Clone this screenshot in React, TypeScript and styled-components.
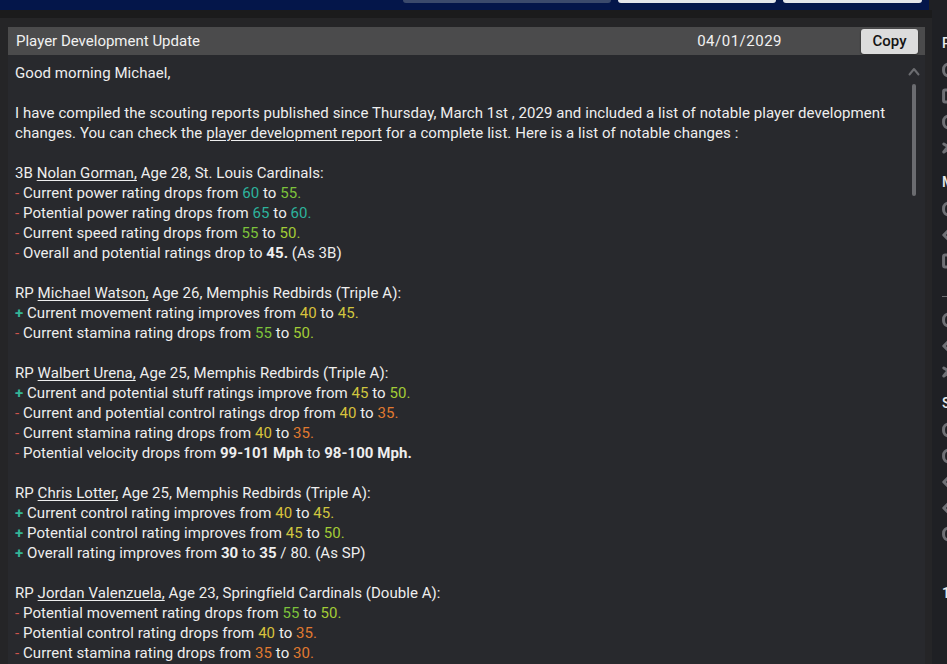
import React from "react";
import styled, { createGlobalStyle } from "styled-components";

const Global = createGlobalStyle`
  html, body { margin: 0; padding: 0; background: #1f2024; overflow: hidden; }
  body { font-family: Roboto, "Noto Sans", "Liberation Sans", sans-serif; }
  * { box-sizing: border-box; }
`;

const Root = styled.div`
  display: flex;
  width: 947px;
  height: 664px;
  overflow: hidden;
`;

const Main = styled.div`
  width: 932px;
  flex: none;
  display: flex;
  flex-direction: column;
`;

const TopBar = styled.div`
  height: 10px;
  margin-right: 3px;
  background: #04164a;
  display: flex;
  align-items: flex-start;
  gap: 7px;
  padding-left: 403px;
`;

const NavButton = styled.div<{ $w: number; $light?: boolean }>`
  width: ${(p) => p.$w}px;
  height: 3px;
  border-radius: 0 0 3px 3px;
  background: ${(p) => (p.$light ? "#e4e6ea" : "#3b4a6c")};
`;

const Band = styled.div`
  height: 8px;
  background: #1b1b1c;
`;

const Panel = styled.div`
  flex: 1;
  min-height: 0;
  background: #252527;
  padding: 9px 7px 0 8px;
  display: flex;
  flex-direction: column;
`;

const Header = styled.div`
  height: 28px;
  flex: none;
  background: #4b4b4c;
  display: flex;
  align-items: center;
  padding: 0 7px 0 8px;
  color: #f1f1f1;
  font-size: 15px;
`;

const HeaderTitle = styled.div`
  flex: 1;
`;

const HeaderDate = styled.div`
  margin-right: 79px;
  letter-spacing: 0.5px;
`;

const CopyButton = styled.button`
  width: 57px;
  height: 25px;
  border: none;
  border-radius: 3px;
  background: #dcdcdc;
  color: #141414;
  font-family: Roboto, "Liberation Sans", sans-serif;
  font-size: 15px;
  font-weight: 500;
  padding: 0;
  box-shadow: 0 1px 2px rgba(0, 0, 0, 0.5);
`;

const Body = styled.div`
  flex: 1;
  min-height: 0;
  background: #28292d;
  display: flex;
  padding-right: 5px;
`;

const Content = styled.div`
  flex: 1;
  min-width: 0;
  padding: 8px 0 0 7px;
  font-size: 15px;
  line-height: 20px;
  letter-spacing: 0.06px;
  color: #eeeeee;
  overflow: hidden;
`;

const Rail = styled.div`
  width: 12px;
  flex: none;
  display: flex;
  flex-direction: column;
  align-items: center;
  padding-top: 12px;
`;

const Thumb = styled.div`
  width: 4px;
  height: 112px;
  margin-top: 8px;
  border-radius: 2px;
  background: #6b6c70;
`;

const Para = styled.p`
  margin: 0 0 20px 0;
`;

const Block = styled.div`
  margin-bottom: 20px;
`;

const Line = styled.div``;

const Link = styled.span`
  text-decoration: underline;
  text-underline-offset: 2px;
`;

const Strong = styled.b`
  font-weight: 700;
`;

const Sign = styled.span<{ $plus?: boolean }>`
  color: ${(p) => (p.$plus ? "#34b596" : "#cc544c")};
  font-weight: ${(p) => (p.$plus ? 700 : 400)};
`;

const colorFor: Record<number, string> = {
  30: "#e07a30",
  35: "#e07a30",
  40: "#d8c23c",
  45: "#d0c63f",
  50: "#a3cc36",
  55: "#7dc23b",
  60: "#2db39c",
  65: "#2db39c",
};

const Num = styled.span<{ $v: number }>`
  color: ${(p) => colorFor[p.$v] ?? "#ececec"};
`;

const Sidebar = styled.div`
  flex: 1;
  background: #1f2024;
  padding: 33px 0 0 10px;
  overflow: hidden;
  display: flex;
  flex-direction: column;
  white-space: nowrap;
`;

const SideTitle = styled.div<{ $mt?: number }>`
  height: 20px;
  line-height: 20px;
  margin-top: ${(p) => p.$mt ?? 0}px;
  margin-bottom: 4px;
  color: #e9e9ea;
  font-size: 14px;
  font-weight: 500;
`;

const SideItem = styled.div`
  height: 26px;
  display: flex;
  align-items: center;
  color: #6f7075;
  & > svg {
    flex: none;
  }
`;

const SideDivider = styled.div`
  height: 1px;
  width: 40px;
  flex: none;
  margin: 22px 0 10px;
  background: #6b6c70;
`;

type Shape = "round" | "square" | "chev" | "x";

const SideIcon: React.FC<{ s: Shape }> = ({ s }) => (
  <SideItem>
    <svg width="18" height="18" viewBox="0 0 18 18" fill="none" stroke="currentColor" strokeWidth="3" strokeLinecap="round" strokeLinejoin="round">
      {s === "round" && <rect x="1.6" y="3" width="14" height="12" rx="5" />}
      {s === "square" && <rect x="1.6" y="3" width="14" height="12" rx="1.5" />}
      {s === "chev" && <path d="M8 3 L1.8 9 L8 15" />}
      {s === "x" && <path d="M1.8 5 L8 9 L1.8 13 M8 5 L1.8 13" />}
    </svg>
  </SideItem>
);

const Sep = () => <Sign>- </Sign>;
const Plus = () => <Sign $plus>+ </Sign>;

export default function App() {
  return (
    <Root>
      <Global />
      <Main>
        <TopBar>
          <NavButton $w={208} />
          <NavButton $w={158} $light />
          <NavButton $w={139} $light />
        </TopBar>
        <Band />
        <Panel>
          <Header>
            <HeaderTitle>Player Development Update</HeaderTitle>
            <HeaderDate>04/01/2029</HeaderDate>
            <CopyButton>Copy</CopyButton>
          </Header>
          <Body>
            <Content>
              <Para>Good morning Michael,</Para>
              <Para>
                I have compiled the scouting reports published since Thursday, March 1st , 2029 and included a list of notable player development changes. You can check the <Link>player development report</Link> for a complete list. Here is a list of notable changes :
              </Para>

              <Block>
                <Line>3B <Link>Nolan Gorman,</Link> Age 28, St. Louis Cardinals:</Line>
                <Line><Sep />Current power rating drops from <Num $v={60}>60</Num> to <Num $v={55}>55.</Num></Line>
                <Line><Sep />Potential power rating drops from <Num $v={65}>65</Num> to <Num $v={60}>60.</Num></Line>
                <Line><Sep />Current speed rating drops from <Num $v={55}>55</Num> to <Num $v={50}>50.</Num></Line>
                <Line><Sep />Overall and potential ratings drop to <Strong>45.</Strong> (As 3B)</Line>
              </Block>

              <Block>
                <Line>RP <Link>Michael Watson,</Link> Age 26, Memphis Redbirds (Triple A):</Line>
                <Line><Plus />Current movement rating improves from <Num $v={40}>40</Num> to <Num $v={45}>45.</Num></Line>
                <Line><Sep />Current stamina rating drops from <Num $v={55}>55</Num> to <Num $v={50}>50.</Num></Line>
              </Block>

              <Block>
                <Line>RP <Link>Walbert Urena,</Link> Age 25, Memphis Redbirds (Triple A):</Line>
                <Line><Plus />Current and potential stuff ratings improve from <Num $v={45}>45</Num> to <Num $v={50}>50.</Num></Line>
                <Line><Sep />Current and potential control ratings drop from <Num $v={40}>40</Num> to <Num $v={35}>35.</Num></Line>
                <Line><Sep />Current stamina rating drops from <Num $v={40}>40</Num> to <Num $v={35}>35.</Num></Line>
                <Line><Sep />Potential velocity drops from <Strong>99-101 Mph</Strong> to <Strong>98-100 Mph.</Strong></Line>
              </Block>

              <Block>
                <Line>RP <Link>Chris Lotter,</Link> Age 25, Memphis Redbirds (Triple A):</Line>
                <Line><Plus />Current control rating improves from <Num $v={40}>40</Num> to <Num $v={45}>45.</Num></Line>
                <Line><Plus />Potential control rating improves from <Num $v={45}>45</Num> to <Num $v={50}>50.</Num></Line>
                <Line><Plus />Overall rating improves from <Strong>30</Strong> to <Strong>35</Strong> / 80. (As SP)</Line>
              </Block>

              <Block>
                <Line>RP <Link>Jordan Valenzuela,</Link> Age 23, Springfield Cardinals (Double A):</Line>
                <Line><Sep />Potential movement rating drops from <Num $v={55}>55</Num> to <Num $v={50}>50.</Num></Line>
                <Line><Sep />Potential control rating drops from <Num $v={40}>40</Num> to <Num $v={35}>35.</Num></Line>
                <Line><Sep />Current stamina rating drops from <Num $v={35}>35</Num> to <Num $v={30}>30.</Num></Line>
              </Block>
            </Content>
            <Rail>
              <svg width="12" height="9" viewBox="0 0 12 9" fill="none" stroke="#6b6c70" strokeWidth="2" strokeLinecap="round" strokeLinejoin="round">
                <path d="M1.5 7.5 L6 2 L10.5 7.5" />
              </svg>
              <Thumb />
            </Rail>
          </Body>
        </Panel>
      </Main>
      <Sidebar>
        <SideTitle>P</SideTitle>
        <SideIcon s="round" />
        <SideIcon s="square" />
        <SideIcon s="round" />
        <SideIcon s="x" />
        <SideTitle $mt={11}>M</SideTitle>
        <SideIcon s="round" />
        <SideIcon s="chev" />
        <SideIcon s="square" />
        <SideDivider />
        <SideIcon s="round" />
        <SideIcon s="chev" />
        <SideIcon s="x" />
        <SideTitle $mt={8}>S</SideTitle>
        <SideIcon s="round" />
        <SideIcon s="round" />
        <SideIcon s="chev" />
        <SideIcon s="chev" />
        <SideIcon s="round" />
        <SideTitle $mt={36}>1</SideTitle>
      </Sidebar>
    </Root>
  );
}
